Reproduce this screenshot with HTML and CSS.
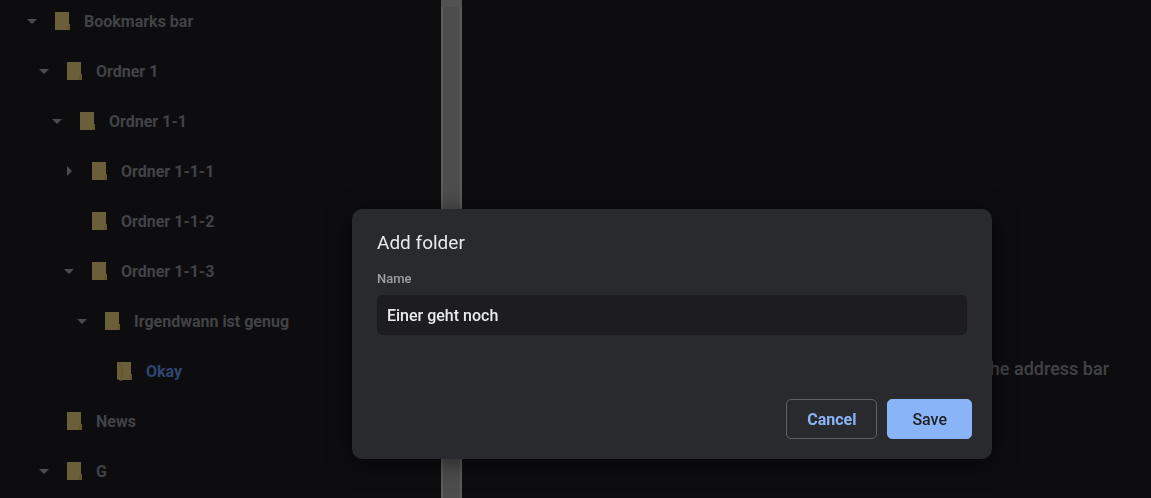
FILE: index.html
```html
<!DOCTYPE html>
<html lang="en">
<head>
    <meta charset="UTF-8">
    <meta name="viewport" content="width=device-width, initial-scale=1.0">
    <title>Bookmarks</title>
    <link rel="stylesheet" href="styles.css">
</head>
<body>
    <svg class="symbols" aria-hidden="true">
        <symbol id="folder" viewBox="0 0 16 18">
            <path d="M1 0h14v12h1v6H1z" fill="#6b5f39"/>
            <path d="M15 12h1v6h-3v-4z" fill="#66562b"/>
        </symbol>
        <symbol id="arrow" viewBox="0 0 10 5">
            <path d="M0 0h10L5 5z" fill="currentColor"/>
        </symbol>
    </svg>

    <div class="page">
        <nav class="sidebar">
            <ul class="tree">
                <li class="row">
                    <button class="toggle" aria-label="Collapse"><svg class="arrow"><use href="#arrow"/></svg></button>
                    <svg class="folder"><use href="#folder"/></svg>
                    <a href="#">Bookmarks bar</a>
                </li>
                <li class="row level-1">
                    <button class="toggle" aria-label="Collapse"><svg class="arrow"><use href="#arrow"/></svg></button>
                    <svg class="folder"><use href="#folder"/></svg>
                    <a href="#">Ordner 1</a>
                </li>
                <li class="row level-2">
                    <button class="toggle" aria-label="Collapse"><svg class="arrow"><use href="#arrow"/></svg></button>
                    <svg class="folder"><use href="#folder"/></svg>
                    <a href="#">Ordner 1-1</a>
                </li>
                <li class="row level-3">
                    <button class="toggle closed" aria-label="Expand"><svg class="arrow"><use href="#arrow"/></svg></button>
                    <svg class="folder"><use href="#folder"/></svg>
                    <a href="#">Ordner 1-1-1</a>
                </li>
                <li class="row level-3">
                    <span class="toggle"></span>
                    <svg class="folder"><use href="#folder"/></svg>
                    <a href="#">Ordner 1-1-2</a>
                </li>
                <li class="row level-3">
                    <button class="toggle" aria-label="Collapse"><svg class="arrow"><use href="#arrow"/></svg></button>
                    <svg class="folder"><use href="#folder"/></svg>
                    <a href="#">Ordner 1-1-3</a>
                </li>
                <li class="row level-4">
                    <button class="toggle" aria-label="Collapse"><svg class="arrow"><use href="#arrow"/></svg></button>
                    <svg class="folder"><use href="#folder"/></svg>
                    <a href="#">Irgendwann ist genug</a>
                </li>
                <li class="row level-5 selected">
                    <span class="toggle"></span>
                    <!-- open folder -->
                    <svg class="folder" viewBox="0 0 16 18">
                        <path d="M1 0h14v12h1v6H7l-2 1-4-2z" fill="#6b5f39"/>
                        <path d="M2 1l4 3v11l-2 3" fill="none" stroke="#62532a"/>
                        <path d="M15 12h1v6h-3v-4z" fill="#66562b"/>
                    </svg>
                    <a href="#">Okay</a>
                </li>
                <li class="row level-1">
                    <span class="toggle"></span>
                    <svg class="folder"><use href="#folder"/></svg>
                    <a href="#">News</a>
                </li>
                <li class="row level-1">
                    <button class="toggle" aria-label="Collapse"><svg class="arrow"><use href="#arrow"/></svg></button>
                    <svg class="folder"><use href="#folder"/></svg>
                    <a href="#">G</a>
                </li>
            </ul>
        </nav>
        <div class="scrollbar"><div class="thumb"></div></div>
        <main class="list">
            <p>the address bar</p>
        </main>
    </div>

    <div class="overlay">
        <form class="dialog" role="dialog" aria-labelledby="dialogTitle">
            <h1 id="dialogTitle">Add folder</h1>
            <label for="folderName">Name</label>
            <input type="text" id="folderName" value="Einer geht noch">
            <div class="buttons">
                <button type="button" class="cancel">Cancel</button>
                <button type="submit" class="save">Save</button>
            </div>
        </form>
    </div>
</body>
</html>
```
FILE: styles.css
```css
* {
    box-sizing: border-box;
}
body {
    margin: 0;
    font-family: Roboto, "Liberation Sans", sans-serif;
    font-size: 16px;
    font-weight: 500;
    color: #424346;
    background-color: #0d0d0f;
}
.symbols {
    display: none;
}
.page {
    display: flex;
    height: 100vh;
    overflow: hidden;
}
.sidebar {
    flex: 0 0 441px;
    overflow: hidden;
}
.tree {
    list-style: none;
    margin: -4px 0 0;
    padding: 0 0 0 24px;
}
.row {
    display: flex;
    align-items: center;
    height: 50px;
    font-weight: 700;
}
.row a {
    margin-left: 14px;
    color: inherit;
    text-decoration: none;
}
.level-1 {
    padding-left: 12px;
}
.level-2 {
    padding-left: 25px;
}
.level-3 {
    padding-left: 37px;
}
.level-4 {
    padding-left: 50px;
}
.level-5 {
    padding-left: 62px;
}
.selected {
    color: #2f4672;
}
.toggle {
    display: flex;
    align-items: center;
    justify-content: center;
    width: 16px;
    height: 16px;
    margin-right: 14px;
    padding: 0;
    border: none;
    background: none;
    color: #4b4c4e;
}
.closed {
    transform: rotate(-90deg);
}
.arrow {
    width: 10px;
    height: 5px;
}
.folder {
    width: 16px;
    height: 18px;
    overflow: visible;
}
.scrollbar {
    flex: 0 0 21px;
    padding-top: 7px;
    background-color: #525252;
}
.thumb {
    height: 100%;
    border: solid #5c5c5c;
    border-width: 0 2px;
    background-color: #4d4d4d;
}
.list {
    flex: 1;
    padding: 358px 42px 0;
    text-align: right;
    font-size: 18px;
    line-height: 21px;
}
.list p {
    margin: 0;
}
.overlay {
    position: fixed;
    inset: 0;
    display: flex;
    align-items: flex-start;
    justify-content: flex-end;
    padding: 209px 159px 0 24px;
}
.dialog {
    display: flex;
    flex-direction: column;
    width: 100%;
    max-width: 640px;
    padding: 24px 20px 20px 25px;
    border-radius: 10px;
    background-color: #292a2d;
    box-shadow: 0 4px 24px rgba(0, 0, 0, 0.5);
}
h1 {
    margin: 0;
    font-size: 19px;
    font-weight: 400;
    line-height: 20px;
    color: #e8eaed;
}
label {
    margin-top: 18px;
    font-size: 13px;
    line-height: 16px;
    color: #9aa0a6;
}
input[type="text"] {
    height: 40px;
    margin: 8px 5px 0 0;
    padding: 0 10px;
    border: none;
    border-radius: 5px;
    outline: none;
    font: inherit;
    color: #e8eaed;
    background-color: #1d1d1f;
}
.buttons {
    display: flex;
    justify-content: flex-end;
    gap: 10px;
    margin-top: 64px;
}
.buttons button {
    height: 40px;
    border: 1px solid #5f6368;
    border-radius: 5px;
    font: inherit;
    cursor: pointer;
}
.buttons .cancel {
    padding: 0 20px;
    font-weight: 700;
    color: #8ab4f8;
    background: none;
}
.buttons .save {
    padding: 0 24px;
    border-color: #8ab4f8;
    color: #202124;
    background-color: #8ab4f8;
}
```
